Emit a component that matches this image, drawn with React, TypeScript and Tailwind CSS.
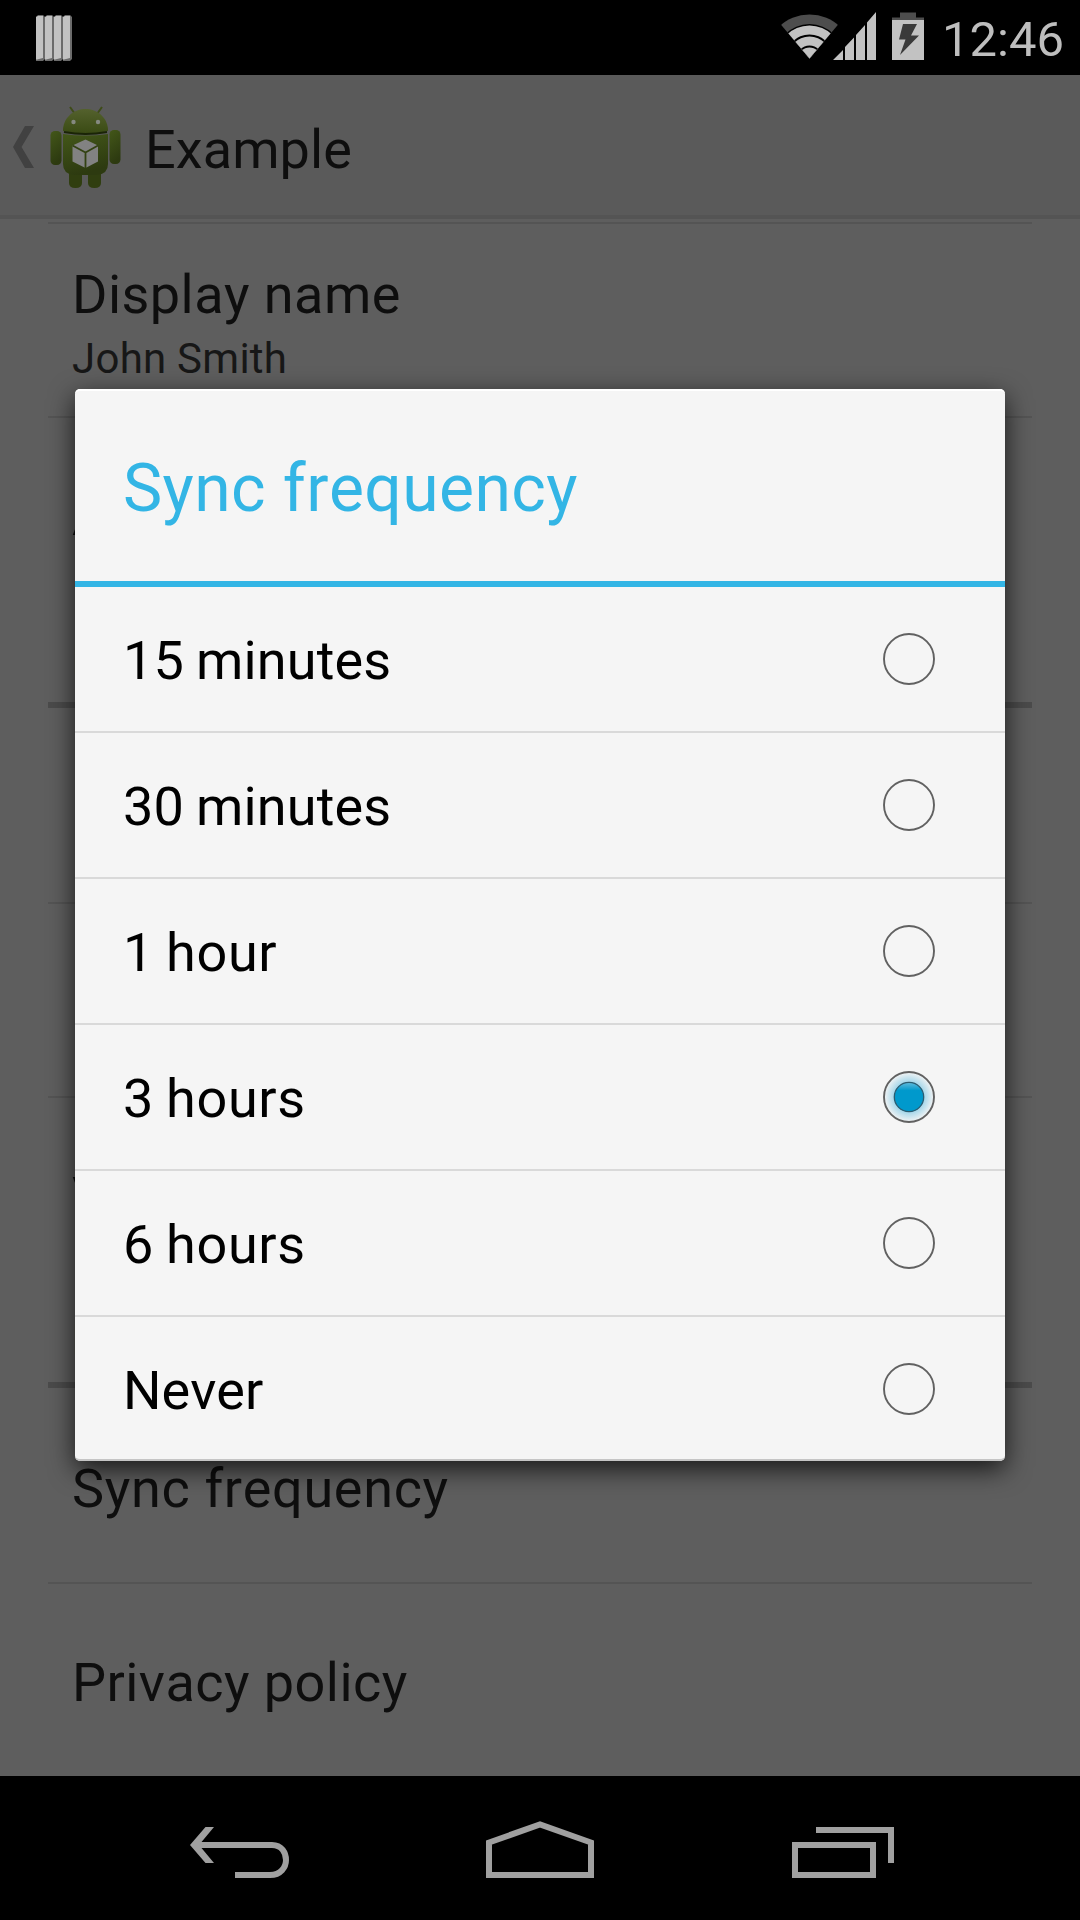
import React from "react";

const options = [
  { label: "15 minutes", tracking: "tracking-[0.15px] [word-spacing:-1.5px]" },
  { label: "30 minutes", tracking: "tracking-[0.15px] [word-spacing:-1.5px]" },
  { label: "1 hour", tracking: "tracking-[0.65px] [word-spacing:-2px]" },
  { label: "3 hours", tracking: "tracking-[0.65px] [word-spacing:-2px]" },
  { label: "6 hours", tracking: "tracking-[0.65px] [word-spacing:-2px]" },
  { label: "Never", tracking: "tracking-normal" },
];

function StatusBar() {
  return (
    <header className="flex h-[75px] shrink-0 items-center bg-black">
      <svg width="36" height="46" viewBox="0 0 36 46" className="mt-px ml-9 block">
        {[0, 9, 18, 27].map((x) => (
          <g key={x}>
            <path d={`M${x} 2L${x + 2} 0H${x + 7}L${x + 9} 2V44L${x + 7} 46H${x}Z`} fill="#6b6b6b" />
            <path d={`M${x} 2L${x + 2} 1H${x + 7}V43L${x + 1} 44.500H${x}Z`} fill="#c2c2c2" />
          </g>
        ))}
      </svg>
      <svg width="164" height="75" viewBox="760 0 164 75" className="ml-[688px] block shrink-0">
        <defs>
          <clipPath id="wifi">
            <path d="M809.500 58.500L777 20V0H842V20Z" />
          </clipPath>
        </defs>
        <g clipPath="url(#wifi)">
          <circle cx="809.500" cy="58.500" r="44" fill="#4d4d4d" />
          <circle cx="809.500" cy="58.500" r="34.500" fill="#000" />
          <circle cx="809.500" cy="58.500" r="33" fill="#c2c2c2" />
          <circle cx="809.500" cy="58.500" r="24" fill="#000" />
          <circle cx="809.500" cy="58.500" r="22" fill="#c2c2c2" />
          <circle cx="809.500" cy="58.500" r="13" fill="#000" />
          <circle cx="809.500" cy="58.500" r="11" fill="#c2c2c2" />
        </g>
        <path d="M833 60L843 50V60ZM845 60V47L854 37.500V60ZM856 60V35L865 25V60ZM867 60V22.500L876 12V60Z" fill="#c2c2c2" />
        <path d="M900 12.500H916V17.500H924V20H892V17.500H900Z" fill="#4d4d4d" />
        <path d="M892 20H924V60H892Z" fill="#c2c2c2" />
        <path d="M903 24H917L911 35.500H919L900 55L905.500 39.500H899Z" fill="#3a3a3a" />
      </svg>
      <span className="ml-[18px] pt-[3px] text-[49px] leading-[75px] font-normal text-[#bebebe]">12:46</span>
    </header>
  );
}

function Robot() {
  return (
    <svg width="72" height="84" viewBox="50 105 72 84" className="ml-4 block">
      <defs>
        <linearGradient id="green" x1="0" x2="0.300" y1="0" y2="1">
          <stop offset="0" stopColor="#435719" />
          <stop offset="1" stopColor="#2d3a10" />
        </linearGradient>
        <linearGradient id="head" x1="0" x2="0" y1="0" y2="1">
          <stop offset="0" stopColor="#54612d" />
          <stop offset="1" stopColor="#394a13" />
        </linearGradient>
      </defs>
      <path d="M70 107L75 114M102 107L97 114" stroke="#3e4c18" strokeWidth="2" />
      <path d="M69 170H82V183Q82 188 75.500 188T69 183ZM88 170H101V183Q101 188 94.500 188T88 183Z" fill="#303e10" />
      <rect x="50.500" y="131" width="11" height="34" rx="4.500" fill="url(#green)" />
      <rect x="109.500" y="130" width="11" height="34" rx="4.500" fill="url(#green)" />
      <path d="M63 131V129C64 117 74 109 85.500 109S107 117 108 129V131Q97 134 85.500 134T63 131Z" fill="url(#head)" />
      <path d="M63 134Q85.500 137 108 134V164Q108 174 97 175H74Q63 174 63 164Z" fill="url(#green)" />
      <path d="M64 132Q85.500 136 107 132" stroke="#1a2406" strokeWidth="1.800" fill="none" />
      <circle cx="73.500" cy="122" r="2.200" fill="#858980" />
      <circle cx="98" cy="122" r="2.200" fill="#858980" />
      <path d="M85.500 139.500L98 145.500V161.500L85.500 168L72.500 161.500V145.500Z" fill="#828282" />
      <path d="M72.500 145.500L85.500 152.500L98 145.500M85.500 152.500V168" stroke="#334212" strokeWidth="1.800" fill="none" />
    </svg>
  );
}

function ActionBar() {
  return (
    <div className="flex h-36 shrink-0 items-center border-b-4 border-[#545454] bg-[#5a5a5a] pt-1">
      <svg width="21" height="42" viewBox="0 0 21 42" className="ml-[13px] block">
        <path d="M12 0H21L8.500 21L21 42H12L0 21Z" fill="#414141" />
      </svg>
      <Robot />
      <h1 className="ml-[23px] pt-[5px] text-[54px] leading-[64px] tracking-[0.1px]">Example</h1>
    </div>
  );
}

function Row({ title, summary, tracking = "tracking-[0.45px]" }: { title?: string; summary?: string; tracking?: string }) {
  return (
    <div className={`flex h-48 shrink-0 flex-col justify-center px-6 pt-1.5 ${tracking}`}>
      <div className={summary ? "-mt-1.5 text-[54px] leading-[64px]" : "text-[54px] leading-[64px]"}>{title}</div>
      {summary && (
        <div className="mt-[7px] -mb-1.5 text-[42px] leading-[50px] tracking-[0.25px] text-[#171717]">{summary}</div>
      )}
    </div>
  );
}

function Thin() {
  return <div className="h-0.5 shrink-0 bg-[#545454]" />;
}

function Category({ title }: { title: string }) {
  return (
    <div className="mb-0.5 flex h-[98px] shrink-0 items-end border-b-6 border-[#4b4b4b] px-6 pb-[17px] text-[42px] leading-[50px]">
      {title}
    </div>
  );
}

function Settings() {
  return (
    <main className="flex h-[1557px] shrink-0 flex-col overflow-hidden bg-[#5e5e5e] px-12 pt-[3px]">
      <Thin />
      <Row title="Display name" summary="John Smith" />
      <Thin />
      <Row title="A" />
      <Category title="N" />
      <Row />
      <Thin />
      <Row />
      <Thin />
      <Row title="V" />
      <Category title="D" />
      <Row title="Sync frequency" tracking="tracking-[0.66px]" />
      <Thin />
      <Row title="Privacy policy" />
    </main>
  );
}

function Radio({ checked }: { checked: boolean }) {
  return (
    <svg width="52" height="52" viewBox="0 0 52 52" className="block" role="radio" aria-checked={checked}>
      <defs>
        <radialGradient id="halo">
          <stop offset="0.550" stopColor="#9bd3e9" />
          <stop offset="1" stopColor="#f4f4f4" />
        </radialGradient>
        <linearGradient id="knob" x1="0" x2="0" y1="0" y2="1">
          <stop offset="0" stopColor="#62bbdc" />
          <stop offset="0.280" stopColor="#0099cc" />
        </linearGradient>
      </defs>
      {checked && <circle cx="26" cy="26" r="25" fill="url(#halo)" />}
      <circle cx="26" cy="26" r="25" fill="none" stroke="#616161" strokeWidth="1.900" />
      {checked && <circle cx="26" cy="26" r="14.700" fill="url(#knob)" stroke="#2b5c70" strokeWidth="1.300" />}
    </svg>
  );
}

function Dialog() {
  return (
    <section
      role="dialog"
      className="absolute top-[389px] left-[75px] flex h-[1072px] w-[930px] flex-col rounded-[5px] bg-[#f5f5f5] shadow-[0_8px_26px_rgba(0,0,0,0.75)]"
    >
      <h2 className="h-48 shrink-0 rounded-t-[5px] border-t-2 border-white px-12 text-[66px] leading-[195px] tracking-[0.4px] text-[#33b5e5]">
        Sync frequency
      </h2>
      <div className="h-1.5 shrink-0 bg-[#33b5e5]" />
      {options.map(({ label, tracking }, i) => (
        <div
          key={label}
          className="flex h-[146px] shrink-0 items-center justify-between border-b-2 border-[#d9d9d9] pr-[70px] pl-12 last:h-[144px] last:rounded-b-[5px] last:border-[#c5c5c5] last:pt-0.5"
        >
          <span className={`pt-1 text-[54px] leading-[64px] text-black ${tracking}`}>{label}</span>
          <Radio checked={i === 3} />
        </div>
      ))}
    </section>
  );
}

function NavBar() {
  return (
    <nav className="flex h-36 shrink-0 items-start bg-black pt-[45px] pl-[190px]">
      <svg width="100" height="60" viewBox="0 -3 100 60" className="block">
        <path d="M6 21H82C92 21 96 29 96 36S91 51 80 51H45" fill="none" stroke="#a0a0a0" strokeWidth="6" />
        <path d="M15.500 3H24L9 21L24 39H15.500L0 21Z" fill="#a0a0a0" />
      </svg>
      <svg width="108" height="60" viewBox="0 0 108 60" className="ml-[196px] block">
        <path d="M3 54V21.500L54 3.500L105 21.500V54Z" fill="none" stroke="#a0a0a0" strokeWidth="6" />
      </svg>
      <svg width="102" height="60" viewBox="0 -3 102 60" className="ml-[198px] block">
        <path d="M3 21H81V51H3ZM24 6H99V39" fill="none" stroke="#a0a0a0" strokeWidth="6" />
      </svg>
    </nav>
  );
}

export default function App() {
  return (
    <div className="relative flex h-[1920px] w-[1080px] flex-col overflow-hidden bg-black font-['Roboto',sans-serif] text-[#0e0e0e] [font-kerning:none]">
      <StatusBar />
      <ActionBar />
      <Settings />
      <NavBar />
      <Dialog />
    </div>
  );
}
